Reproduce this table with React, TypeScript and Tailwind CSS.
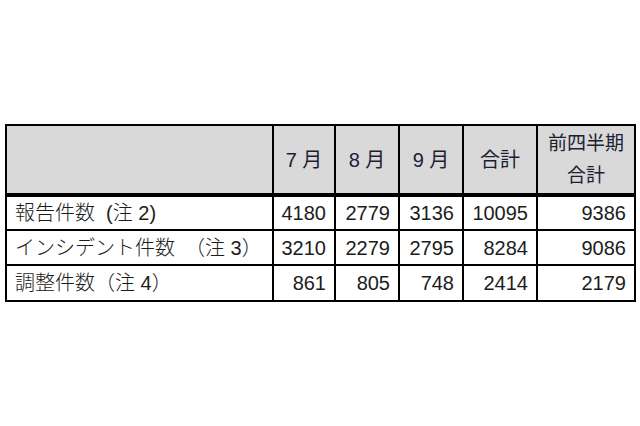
const rows = [
  { label: '報告件数\u00A0\u00A0(注 2)', values: ['4180', '2779', '3136', '10095', '9386'] },
  { label: 'インシデント件数　（注 3）', values: ['3210', '2279', '2795', '8284', '9086'] },
  { label: '調整件数（注 4）', values: ['861', '805', '748', '2414', '2179'] },
];

const headers = ['7 月', '8 月', '9 月', '合計'];

export default function App() {
  return (
    <div
      className="w-[640px] h-[426px] bg-white pt-[124px] pl-[5px]"
      style={{ fontFamily: '"Liberation Sans", "Noto Sans CJK JP", sans-serif' }}
    >
      <table className="table-fixed border-collapse border-2 border-black text-[20px] text-[#1c1c1c] w-[630px]">
        <colgroup>
          <col className="w-[267px]" />
          <col className="w-[62px]" />
          <col className="w-[64px]" />
          <col className="w-[64px]" />
          <col className="w-[74px]" />
          <col className="w-[98px]" />
        </colgroup>
        <thead>
          <tr className="h-[70px] bg-[#d9d9d9] text-[#1d1d33]">
            <th className="border-2 border-black border-b-4 border-b-double" />
            {headers.map((h) => (
              <th key={h} className="border-2 border-black border-b-4 border-b-double font-normal text-center">
                {h}
              </th>
            ))}
            <th className="border-2 border-black border-b-4 border-b-double font-normal text-center text-[19px] leading-[32px]">
              前四半期
              <br />
              合計
            </th>
          </tr>
        </thead>
        <tbody>
          {rows.map((r, i) => (
            <tr key={r.label} className={i === 2 ? 'h-[36px]' : 'h-[35px]'}>
              <td className="border-2 border-black pl-[8px] whitespace-nowrap font-light">{r.label}</td>
              {r.values.map((v, j) => (
                <td key={j} className="border-2 border-black text-right pr-[8px]">
                  {v}
                </td>
              ))}
            </tr>
          ))}
        </tbody>
      </table>
    </div>
  );
}
